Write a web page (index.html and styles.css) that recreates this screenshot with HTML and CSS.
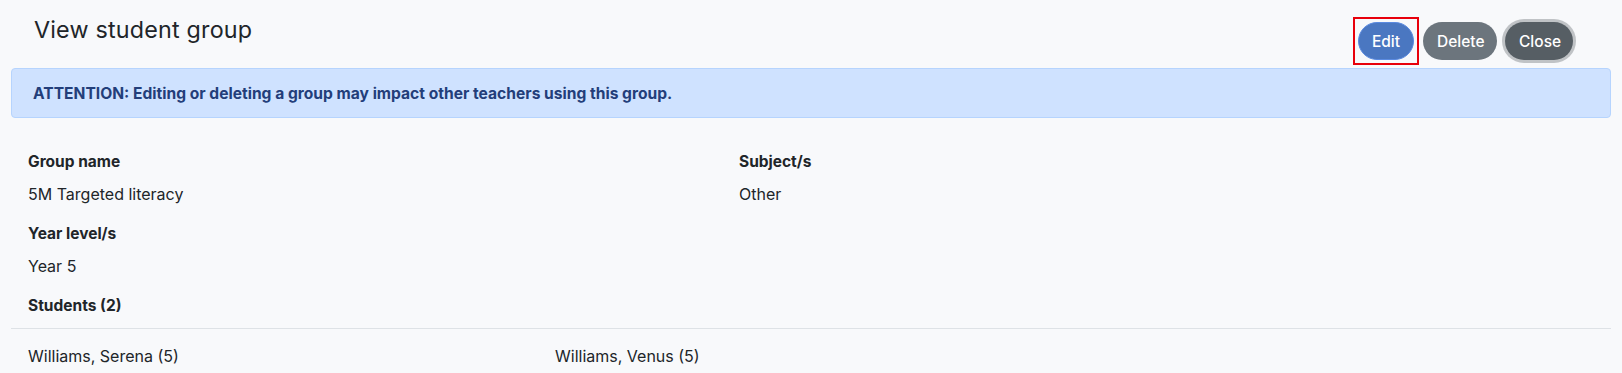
FILE: index.html
```html
<!DOCTYPE html>
<html lang="en">
<head>
  <meta charset="UTF-8">
  <title>View student group</title>
  <link rel="stylesheet" href="styles.css">
</head>
<body>

<div class="page">
  <div class="top-bar">
    <h1>View student group</h1>
    <div class="actions">
      <span class="focus-box"><button class="btn btn-edit">Edit</button></span>
      <button class="btn btn-delete">Delete</button>
      <button class="btn btn-close">Close</button>
    </div>
  </div>

  <div class="alert">ATTENTION: Editing or deleting a group may impact other teachers using this group.</div>

  <div class="details">
    <div class="col">
      <div class="label">Group name</div>
      <div class="value">5M Targeted literacy</div>
      <div class="label">Year level/s</div>
      <div class="value">Year 5</div>
      <div class="label">Students (2)</div>
    </div>
    <div class="col">
      <div class="label">Subject/s</div>
      <div class="value">Other</div>
    </div>
  </div>

  <div class="students">
    <div class="student">Williams, Serena (5)</div>
    <div class="student">Williams, Venus (5)</div>
  </div>
</div>

</body>
</html>
```

FILE: styles.css
```css
body {
  margin: 0;
  background-color: #f8f9fb;
  font-family: Inter, "Noto Sans", sans-serif;
  color: #212529;
}

.page {
  padding: 0 11px;
}

.top-bar {
  display: flex;
  justify-content: space-between;
  align-items: flex-start;
  height: 68px;
}

h1 {
  font-size: 23.3px;
  font-weight: 400;
  margin: 15px 0 0 23px;
  letter-spacing: 0.2px;
}

.actions {
  display: flex;
  align-items: center;
  margin-top: 17px;
  margin-right: 38px;
}

.focus-box {
  border: 2px solid #e8000b;
  padding: 3px 3px;
  margin-right: 2px;
  display: flex;
}

.btn {
  font-family: inherit;
  font-size: 15.5px;
  font-weight: 500;
  color: white;
  height: 38px;
  border-radius: 19px;
  border: 1px solid transparent;
  padding: 0 13px;
  cursor: pointer;
}

.btn-edit {
  background-color: #4a77c1;
  border-color: #5a8ae0;
}

.btn-delete {
  background-color: #6c757d;
  margin-left: 2px;
  width: 74px;
}

.btn-close {
  background-color: #565e64;
  margin-left: 8px;
  width: 68px;
  box-shadow: 0 0 0 3px #c0c3c6;
}

.alert {
  background-color: #cfe2ff;
  border: 1px solid #b6d4fe;
  border-radius: 4px;
  color: #233e7a;
  font-weight: 700;
  font-size: 15.6px;
  padding: 15px 21px 14px;
  margin-bottom: 34px;
}

.details {
  display: grid;
  grid-template-columns: 711px 1fr;
  padding: 0 17px;
}

.label {
  font-weight: 700;
  font-size: 15.5px;
  line-height: 20px;
}

.value {
  font-size: 16px;
  line-height: 20px;
  margin: 12px 0 20px;
}

.students {
  display: grid;
  grid-template-columns: 527px 527px 1fr;
  border-top: 1px solid #dee2e6;
  margin-top: 12px;
  padding: 17px 17px 0;
}

.student {
  font-size: 16px;
  line-height: 20px;
}
```
